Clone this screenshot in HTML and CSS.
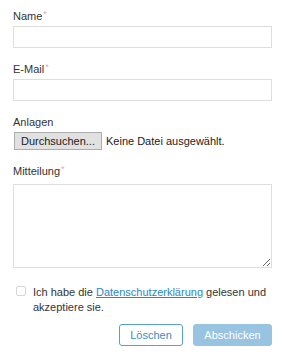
FILE: index.html
```html
<!DOCTYPE html>
<html lang="de">
<head>
    <meta charset="UTF-8">
    <meta name="viewport" content="width=device-width, initial-scale=1.0">
    <title>Kontakt</title>
    <link rel="stylesheet" href="styles.css">
</head>
<body>

    <!-- Kontaktformular -->
    <form class="contact-form">
        <div class="field">
            <label for="name">Name<span class="req">*</span></label>
            <input type="text" id="name" name="name">
        </div>

        <div class="field">
            <label for="email">E-Mail<span class="req">*</span></label>
            <input type="email" id="email" name="email">
        </div>

        <div class="field">
            <label>Anlagen</label>
            <div class="file-row">
                <button type="button" class="file-button">Durchsuchen...</button>
                <span class="file-name">Keine Datei ausgewählt.</span>
            </div>
        </div>

        <div class="field">
            <label for="message">Mitteilung<span class="req">*</span></label>
            <textarea id="message" name="message"></textarea>
        </div>

        <div class="consent">
            <input type="checkbox" id="privacy" name="privacy">
            <label for="privacy">Ich habe die <a href="#">Datenschutzerklärung</a> gelesen und akzeptiere sie.</label>
        </div>

        <div class="actions">
            <button type="reset" class="reset-button">Löschen</button>
            <button type="submit" class="submit-button">Abschicken</button>
        </div>
    </form>

</body>
</html>
```

FILE: styles.css
```css
body {
    font-family: "Liberation Sans", Arial, sans-serif;
    font-size: 11px;
    line-height: 16px;
    color: #333;
    margin: 0;
    background-color: #ffffff;
}

.contact-form {
    padding: 8px 14px 0 13px;
    display: flex;
    flex-direction: column;
    gap: 13px;
}

.field {
    display: flex;
    flex-direction: column;
}

.field label {
    display: block;
    margin-bottom: 2px;
}

/* little pink star after required fields */
.req {
    color: #e3a9a9;
    font-size: 9px;
    line-height: 9px;
    vertical-align: top;
    margin-left: 1px;
    position: relative;
    top: 2px;
}

input[type="text"], input[type="email"], textarea {
    box-sizing: border-box;
    width: 100%;
    height: 22px;
    margin: 0;
    padding: 3px 5px;
    border: 1px solid #dedede;
    border-radius: 0;
    font: inherit;
    background: #fff;
}

textarea {
    height: 84px;
    margin-top: 3px;
    resize: vertical;
}

.file-row {
    display: flex;
    align-items: center;
    gap: 4px;
}

.file-button {
    font: inherit;
    color: #222;
    background-color: #e1e1e1;
    border: 1px solid #adadad;
    height: 18px;
    padding: 0 6px;
    margin: 0 0 0 1px;
    line-height: 14px;
    cursor: pointer;
}

.file-name {
    color: #222;
}

.consent {
    display: flex;
    align-items: flex-start;
    gap: 7px;
    margin-top: 4px;
    padding-left: 3px;
    line-height: 15px;
}

.consent input {
    appearance: none;
    flex: none;
    width: 10px;
    height: 10px;
    margin: 1px 0 0 0;
    border: 1px solid #d6d6d6;
    border-radius: 2px;
    background: #fff;
}

.consent a {
    color: #2b86c5;
    text-decoration: underline;
}

.actions {
    display: flex;
    justify-content: flex-end;
    gap: 10px;
    margin-top: -4px;
}

.actions button {
    font: inherit;
    height: 22px;
    border-radius: 3px;
    cursor: pointer;
    padding: 0;
}

.reset-button {
    width: 64px;
    color: #3a8bc6;
    background-color: #ffffff;
    border: 1px solid #5a9fd4;
}

.submit-button {
    width: 79px;
    color: #ffffff;
    background-color: #98c3e1;
    border: 1px solid #98c3e1;
}
```
